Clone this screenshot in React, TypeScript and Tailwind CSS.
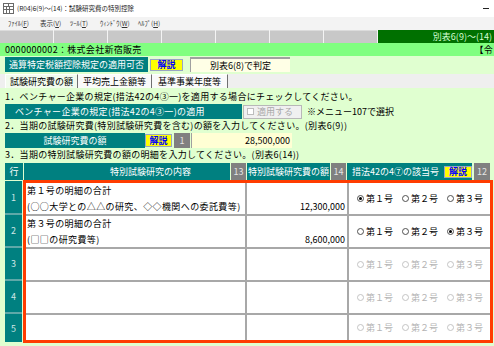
import React from "react";

const teal = "bg-[#008080] text-white";

function Kaisetsu({ className = "" }: { className?: string }) {
  return (
    <div
      className={`flex items-center justify-center border border-[#98a4c4] bg-[#ffff00] font-bold text-[#0000ff] ${className}`}
    >
      解説
    </div>
  );
}

function NumTag({ n, className = "" }: { n: string; className?: string }) {
  return (
    <div className={`flex items-center justify-center bg-[#808080] text-[#e4e4e4] ${className}`}>
      {n}
    </div>
  );
}

function Radio({ label, checked, disabled }: { label: string; checked: boolean; disabled: boolean }) {
  return (
    <div className="flex w-[45px] shrink-0 items-center gap-[2px]">
      <span
        className={`flex h-[7px] w-[7px] items-center justify-center rounded-full border bg-white ${
          disabled ? "border-[#c4c4c4]" : "border-[#505050]"
        }`}
      >
        {checked ? <span className="h-[3px] w-[3px] rounded-full bg-black" /> : null}
      </span>
      <span className={disabled ? "text-[#b4b4b4]" : "text-black"}>{label}</span>
    </div>
  );
}

const rows = [
  {
    lines: ["第１号の明細の合計", "(○○大学との△△の研究、◇◇機関への委託費等)"],
    amount: "12,300,000",
    sel: 0,
    disabled: false,
  },
  { lines: ["第３号の明細の合計", "(□□の研究費等)"], amount: "8,600,000", sel: 2, disabled: false },
  { lines: [], amount: "", sel: -1, disabled: true },
  { lines: [], amount: "", sel: -1, disabled: true },
  { lines: [], amount: "", sel: -1, disabled: true },
];

const menus = [
  { label: "ﾌｧｲﾙ(", key: "F", w: "w-[32px]" },
  { label: "表示(", key: "V", w: "w-[30px]" },
  { label: "ﾂｰﾙ(", key: "T", w: "w-[30px]" },
  { label: "ｳｨﾝﾄﾞｳ(", key: "W", w: "w-[38px]" },
  { label: "ﾍﾙﾌﾟ(", key: "H", w: "w-[30px]" },
];

export default function App() {
  return (
    <div className="h-[346px] w-[494px] overflow-hidden bg-[#e0ffd0] font-['Noto_Sans_CJK_JP',sans-serif] text-[9px] leading-none text-black">
      {/* title bar */}
      <div className="flex h-[17px] items-center bg-white">
        <svg className="ml-[3px]" width="11" height="11" viewBox="0 0 11 11">
          <rect width="11" height="11" fill="#6a6a6a" />
          <rect x="1" y="1" width="4" height="2" fill="#fff" />
          <rect x="6" y="1" width="4" height="2" fill="#fff" />
          <rect x="1" y="4" width="2" height="2" fill="#fff" />
          <rect x="4" y="4" width="2" height="2" fill="#fff" />
          <rect x="7" y="4" width="3" height="2" fill="#fff" />
          <rect x="1" y="7" width="2" height="3" fill="#fff" />
          <rect x="4" y="7" width="2" height="3" fill="#fff" />
          <rect x="7" y="7" width="3" height="3" fill="#fff" />
        </svg>
        <span className="ml-[3px] text-[6.5px] text-[#222]">(R04)6(9)〜(14)：試験研究費の特別控除</span>
        <div className="ml-auto mr-[5px] h-px w-[6px] bg-[#222]" />
      </div>

      {/* menu bar */}
      <div className="flex h-[13px] items-center bg-[#f3f3f3] pl-[8px] text-[6.5px] text-[#333]">
        {menus.map((m) => (
          <span key={m.key} className={m.w}>
            {m.label}
            <span className="underline">{m.key}</span>)
          </span>
        ))}
      </div>

      {/* toolbar */}
      <div className="flex h-[13px] gap-px bg-[#f4f4f4]">
        {Array.from({ length: 7 }).map((_, i) => (
          <div key={i} className="h-full w-[53px] border-t border-[#dcdcdc] bg-[#c8c8c8]" />
        ))}
        <div className="flex flex-1 items-center justify-end bg-[#007000] pr-[2px] text-[#d4ffd4]">
          別表6(9)〜(14)
        </div>
      </div>

      {/* company bar */}
      <div className="flex h-[13px] items-center bg-[#80ff80] tracking-[0.3px]">
        <span className="ml-[5px] flex-1">0000000002：株式会社新宿販売</span>
        <span className="mr-px shrink-0">【令</span>
      </div>

      {/* 通算 row */}
      <div className="mt-px flex h-[15px] items-center">
        <div className={`ml-[5px] flex h-[15px] w-[143px] items-center justify-center ${teal}`}>
          通算特定税額控除規定の適用可否
        </div>
        <Kaisetsu className="ml-[2px] h-[12px] w-[33px]" />
        <div className="ml-[7px] flex h-[15px] w-[100px] items-center justify-center border-t-2 border-l border-[#a0a0a0] bg-[#ffffe6]">
          別表6(8)で判定
        </div>
      </div>

      {/* tabs */}
      <div className="mt-[2px] flex h-[14px] bg-[#efefef]">
        <div className="ml-[5px] flex w-[73px] items-center justify-center border-t border-l border-r border-t-white border-l-white border-r-[#707070] bg-[#f2fbee]">
          試験研究費の額
        </div>
        <div className="flex w-[74px] items-center justify-center border-t border-r border-t-white border-r-[#707070] bg-[#fafafa]">
          平均売上金額等
        </div>
        <div className="flex w-[76px] items-center justify-center border-t border-r border-t-white border-r-[#707070] bg-[#fafafa]">
          基準事業年度等
        </div>
      </div>

      <div className="flex h-[16px] items-center pl-[5px] tracking-[0.3px]">
        1．ベンチャー企業の規定(措法42の4③一)を適用する場合にチェックしてください。
      </div>

      {/* venture row */}
      <div className="flex h-[15px] items-center">
        <div className={`ml-[5px] flex h-[15px] w-[237px] items-center pl-[10px] tracking-[0.3px] ${teal}`}>
          ベンチャー企業の規定(措法42の4③一)の適用
        </div>
        <div className="ml-px flex h-[14px] w-[59px] items-center border border-[#b8b8b8] bg-[#f0f0f0] pl-[3px] text-[#a8a8a8]">
          <span className="h-[7px] w-[7px] border border-[#bcbcbc] bg-white" />
          <span className="ml-[3px]">適用する</span>
        </div>
        <span className="ml-[5px]">※メニュー107で選択</span>
      </div>

      <div className="flex h-[13px] items-center pl-[5px] tracking-[0.3px]">
        2．当期の試験研究費(特別試験研究費を含む)の額を入力してください。(別表6(9))
      </div>

      {/* research amount row */}
      <div className="mt-px flex h-[15px] items-center">
        <div className={`ml-[5px] flex h-[15px] w-[140px] items-center justify-center ${teal}`}>試験研究費の額</div>
        <Kaisetsu className="h-[13px] w-[27px]" />
        <NumTag n="1" className="ml-[2px] h-[15px] w-[16px]" />
        <div className="ml-px flex h-[15px] w-[101px] items-center justify-end border-l border-[#a0a0a0] bg-[#ffffd4] pr-[2px]">
          28,500,000
        </div>
      </div>

      <div className="flex h-[13px] items-center pl-[5px] tracking-[0.3px]">
        3．当期の特別試験研究費の額の明細を入力してください。(別表6(14))
      </div>

      {/* table header */}
      <div className="mt-[2px] flex h-[17px] items-stretch">
        <div className={`ml-[5px] flex w-[18px] items-center justify-center ${teal}`}>行</div>
        <div className={`ml-px flex w-[206px] items-center pl-[86px] ${teal}`}>特別試験研究の内容</div>
        <NumTag n="13" className="ml-px w-[15px]" />
        <div className={`ml-px flex w-[83px] items-center justify-center ${teal}`}>特別試験研究費の額</div>
        <NumTag n="14" className="ml-px w-[15px]" />
        <div className={`ml-px flex w-[97px] items-center justify-center ${teal}`}>措法42の4⑦の該当号</div>
        <div className="flex w-[28px] items-center bg-[#008080]">
          <Kaisetsu className="h-[12px] w-[28px]" />
        </div>
        <NumTag n="12" className="ml-[2px] w-[16px]" />
      </div>

      {/* table body */}
      <div className="flex h-[163px]">
        <div className="ml-[5px] mt-px flex h-[161px] w-[17px] flex-col bg-[#008080]">
          {rows.map((_, i) => (
            <div
              key={i}
              className={`flex items-center justify-center text-[#cfe6e6] ${
                i === 0 ? "h-[34px]" : i === 4 ? "flex-1" : "h-[33px]"
              } ${i < 4 ? "border-b-2 border-[#5fa8a8]" : ""}`}
            >
              {i + 1}
            </div>
          ))}
        </div>
        <div className="ml-px flex h-[163px] w-[470px] flex-col border-[3px] border-[#ff3c00] bg-white">
          {rows.map((r, i) => (
            <div
              key={i}
              className={`flex ${i === 4 ? "flex-1" : "h-[33px] border-b-2 border-[#a8a8a8]"}`}
            >
              <div className="flex w-[219px] flex-col justify-center gap-[7px] pl-px tracking-[0.4px]">
                {r.lines.map((l) => (
                  <span key={l}>{l}</span>
                ))}
              </div>
              <div className="w-[2px] bg-[#a8a8a8]" />
              <div className="flex w-[100px] items-end justify-end pb-[3px] pr-[2px]">{r.amount}</div>
              <div className="w-[2px] bg-[#a8a8a8]" />
              <div className="flex w-[141px] items-center pl-[8px]">
                {["第１号", "第２号", "第３号"].map((lab, j) => (
                  <Radio key={lab} label={lab} checked={r.sel === j} disabled={r.disabled} />
                ))}
              </div>
            </div>
          ))}
        </div>
      </div>
    </div>
  );
}
